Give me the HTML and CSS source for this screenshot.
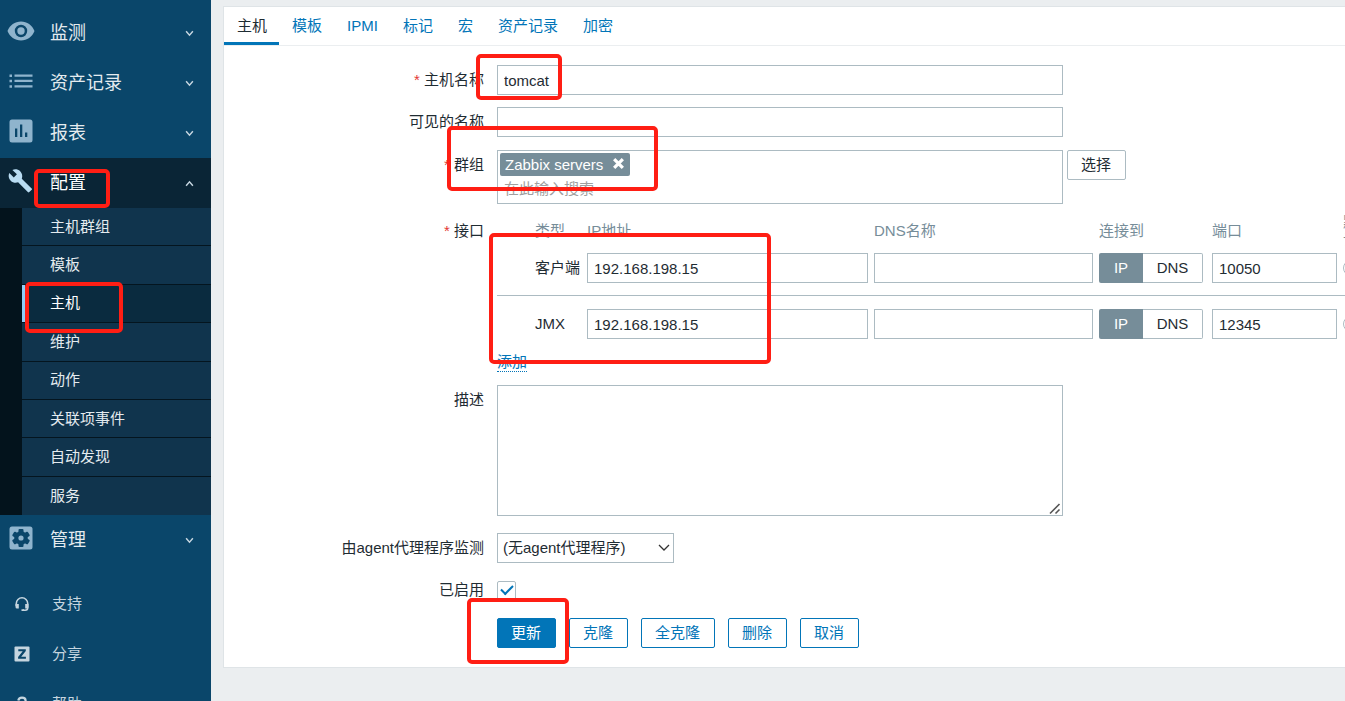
FILE: index.html
```
<!DOCTYPE html>
<html lang="zh-CN">
<head>
<meta charset="utf-8">
<title>主机配置</title>
<link rel="stylesheet" href="styles.css">
</head>
<body>
<div class="app">
  <nav class="sidebar">
    <ul class="menu">
      <li><a class="menu-link" href="#">
        <svg class="icon" viewBox="0 0 28 28"><path fill="currentColor" fill-rule="evenodd" d="M14 4.500C8 4.500 2.700 8.300.500 14c2.200 5.700 7.500 9.500 13.500 9.500s11.300-3.800 13.500-9.500C25.300 8.300 20 4.500 14 4.500zm0 15.700a6.200 6.200 0 1 1 0-12.400 6.200 6.200 0 0 1 0 12.400zm0-2.500a3.700 3.700 0 1 0 0-7.400 3.700 3.700 0 0 0 0 7.400z"/></svg>
        <span>监测</span><svg class="chevron" viewBox="0 0 8 6"><path d="M1 1l3 3.500L7 1"/></svg></a></li>
      <li><a class="menu-link" href="#">
        <svg class="icon" viewBox="0 0 28 28"><path fill="currentColor" d="M2.500 7.500h2.500v2.500H2.500zM7.500 7.500h18v2.300H7.500zM2.500 12.800h2.500v2.500H2.500zM7.500 12.800h18v2.300H7.500zM2.500 18.200h2.500v2.500H2.500zM7.500 18.200h18v2.300H7.500z"/></svg>
        <span>资产记录</span><svg class="chevron" viewBox="0 0 8 6"><path d="M1 1l3 3.500L7 1"/></svg></a></li>
      <li><a class="menu-link" href="#">
        <svg class="icon" viewBox="0 0 28 28"><path fill="currentColor" fill-rule="evenodd" d="M5 2.500h18a2.500 2.500 0 0 1 2.500 2.500v18a2.500 2.500 0 0 1-2.500 2.500H5A2.500 2.500 0 0 1 2.500 23V5A2.500 2.500 0 0 1 5 2.500zM8 11.500V20h2.300v-8.500zM13 7.500V20h2.300V7.500zM18 15.500V20h2.300v-4.500z"/></svg>
        <span>报表</span><svg class="chevron" viewBox="0 0 8 6"><path d="M1 1l3 3.500L7 1"/></svg></a></li>
      <li><a class="menu-link open" href="#">
        <svg class="icon" viewBox="0 0 28 28"><path fill="currentColor" d="M24.600 21.400 14.800 11.700c1-2.500.4-5.400-1.600-7.400C11.100 2.200 8 1.800 5.400 2.900l4.500 4.400-3.100 3.100L2.300 6C1.100 8.500 1.600 11.600 3.700 13.700c2 2 4.900 2.500 7.400 1.600l9.700 9.800c.4.400 1.100.4 1.500 0l2.400-2.400c.5-.4.500-1 0-1.300z"/></svg>
        <span>配置</span><svg class="chevron" viewBox="0 0 8 6"><path d="M1 5l3-3.500L7 5"/></svg></a>
        <ul class="submenu">
          <li><a href="#">主机群组</a></li>
          <li><a href="#">模板</a></li>
          <li><a class="current" href="#">主机</a></li>
          <li><a href="#">维护</a></li>
          <li><a href="#">动作</a></li>
          <li><a href="#">关联项事件</a></li>
          <li><a href="#">自动发现</a></li>
          <li><a href="#">服务</a></li>
        </ul></li>
      <li><a class="menu-link" href="#">
        <svg class="icon" viewBox="0 0 28 28"><rect x="2.500" y="2.500" width="23" height="23" rx="2.500" fill="currentColor"/><g fill="#0a466a"><circle cx="14" cy="14" r="6.800"/><rect x="11.500" y="5" width="5" height="18" rx="1"/><rect x="11.500" y="5" width="5" height="18" rx="1" transform="rotate(60 14 14)"/><rect x="11.500" y="5" width="5" height="18" rx="1" transform="rotate(120 14 14)"/></g><circle cx="14" cy="14" r="2.600" fill="currentColor"/></svg>
        <span>管理</span><svg class="chevron" viewBox="0 0 8 6"><path d="M1 1l3 3.500L7 1"/></svg></a></li>
    </ul>
    <ul class="menu-extra">
      <li><a href="#"><svg class="icon-small" viewBox="0 0 16 16"><path fill="none" stroke="currentColor" stroke-width="1.600" d="M2.300 10V7.500a5.700 5.700 0 0 1 11.400 0V12c0 1.600-1.200 2.200-2.500 2.200H9"/><path fill="currentColor" d="M1.500 8h3.300v4.500H3A1.500 1.500 0 0 1 1.500 11zM14.500 8h-3.300v4.500H13a1.500 1.500 0 0 0 1.500-1.500zM7.500 13.200h2.500v1.900H7.500z"/></svg><span>支持</span></a></li>
      <li><a href="#"><svg class="icon-small" viewBox="0 0 16 16"><rect x=".5" y=".5" width="15" height="15" rx="1" fill="currentColor"/><path fill="#0a466a" d="M4.300 3.200h7.500v1.900L7.200 10.700h4.700v2.100H4.100v-1.900L8.700 5.300H4.300z"/></svg><span>分享</span></a></li>
      <li><a href="#"><svg class="icon-small" viewBox="0 0 16 16"><path fill="none" stroke="currentColor" stroke-width="2.200" d="M4.300 4.500C4.600 2.500 6 1.600 8 1.600c2.200 0 3.600 1.200 3.600 3 0 2.600-3.500 2.600-3.500 5.900M8 12.500V15"/></svg><span>帮助</span></a></li>
    </ul>
  </nav>

  <main class="content">
    <form class="panel">
      <div class="tabs">
        <a class="active" href="#">主机</a><a href="#">模板</a><a href="#">IPMI</a><a href="#">标记</a><a href="#">宏</a><a href="#">资产记录</a><a href="#">加密</a>
      </div>
      <div class="form-body">
        <div class="row"><label class="required" for="host">主机名称</label><input class="field wide" id="host" type="text" value="tomcat"></div>
        <div class="row"><label for="visible">可见的名称</label><input class="field wide" id="visible" type="text"></div>
        <div class="row groups"><label class="required" for="groups">群组</label>
          <div class="multiselect wide">
            <span class="tag">Zabbix servers<button class="tag-remove" type="button" aria-label="移除"><svg viewBox="0 0 12 12"><path d="M2 2l8 8M10 2l-8 8"/></svg></button></span>
            <input id="groups" type="text" placeholder="在此输入搜索">
          </div>
          <button class="btn neutral" type="button">选择</button>
        </div>
        <div class="row interfaces"><span class="label required">接口</span>
          <div>
            <table>
              <colgroup><col class="c-handle"><col class="c-type"><col class="c-ip"><col class="c-dns"><col class="c-connect"><col class="c-port"><col class="c-default"></colgroup>
              <thead><tr><th></th><th>类型</th><th>IP地址</th><th>DNS名称</th><th>连接到</th><th>端口</th><th>默<br>认</th></tr></thead>
              <tbody>
                <tr><td></td><td>客户端</td>
                  <td><input class="field ip" type="text" aria-label="IP地址" value="192.168.198.15"></td>
                  <td><input class="field dns" type="text" aria-label="DNS名称"></td>
                  <td><div class="segmented"><button class="on" type="button">IP</button><button type="button">DNS</button></div></td>
                  <td><input class="field port" type="text" aria-label="端口" value="10050"></td>
                  <td><input class="radio" type="radio" name="d1" aria-label="默认"></td></tr>
                <tr><td></td><td>JMX</td>
                  <td><input class="field ip" type="text" aria-label="IP地址" value="192.168.198.15"></td>
                  <td><input class="field dns" type="text" aria-label="DNS名称"></td>
                  <td><div class="segmented"><button class="on" type="button">IP</button><button type="button">DNS</button></div></td>
                  <td><input class="field port" type="text" aria-label="端口" value="12345"></td>
                  <td><input class="radio" type="radio" name="d2" aria-label="默认"></td></tr>
              </tbody>
            </table>
            <a class="add" href="#">添加</a>
          </div>
        </div>
        <div class="row description"><label for="description">描述</label>
          <div class="textarea-wrap wide"><textarea id="description"></textarea><svg class="grip" viewBox="0 0 12 12"><path d="M1 10.500L10.500 1M6.500 10.500l4-4"/></svg></div></div>
        <div class="row proxy"><label for="proxy">由agent代理程序监测</label>
          <div class="select-wrap"><select id="proxy"><option>(无agent代理程序)</option></select><svg viewBox="0 0 12 8"><path d="M1 1l5 5 5-5"/></svg></div></div>
        <div class="row enabled"><label for="enabled">已启用</label><input class="check" id="enabled" type="checkbox" checked></div>
        <div class="row actions">
          <button class="btn primary" type="button">更新</button><button class="btn" type="button">克隆</button><button class="btn" type="button">全克隆</button><button class="btn" type="button">删除</button><button class="btn" type="button">取消</button>
        </div>
      </div>
    </form>
  </main>

  <div class="mark mark-config"></div>
  <div class="mark mark-hosts"></div>
  <div class="mark mark-name"></div>
  <div class="mark mark-group"></div>
  <div class="mark mark-interfaces"></div>
  <div class="mark mark-update"></div>
</div>
</body>
</html>
```
FILE: styles.css
```
* { box-sizing: border-box; }

body {
  margin: 0;
  background: #ebeef0;
  color: #1f2c33;
  font: 15px/18px "Liberation Sans", "Noto Sans CJK SC", sans-serif;
}

a { color: #0275b8; text-decoration: none; }
ul { list-style: none; margin: 0; padding: 0; }
input, button, select, textarea { font: inherit; color: inherit; margin: 0; }

.app {
  position: relative;
  display: flex;
  height: 100vh;
  overflow: hidden;
}

/* Sidebar */
.sidebar {
  flex: 0 0 211px;
  padding-top: 8px;
  background: #0a466a;
  overflow: hidden;
}

.menu-link {
  display: flex;
  align-items: center;
  height: 50px;
  padding: 0 17px 0 7px;
  color: #e4ebef;
  font-size: 18px;
}
.menu-link span { flex: 1; margin-left: 15px; }
.menu-link.open { background: #0a2536; color: #fff; }
.icon { width: 28px; height: 28px; margin-bottom: 4px; color: #8fb4cd; }
.open .icon { color: #b9dcf2; }
.chevron {
  width: 9px;
  height: 7px;
  fill: none;
  stroke: #c6d6e0;
  stroke-width: 1.3;
}

.submenu {
  display: grid;
  grid-auto-rows: 1fr;
  height: 307px;
  padding-left: 22px;
  background: linear-gradient(#03131c, #03131c) left / 22px 100% no-repeat, #10344d;
}
.submenu li { border-bottom: 1px solid #04151f; }
.submenu li:last-child { border-bottom: 0; }
.submenu a {
  display: flex;
  align-items: center;
  height: 100%;
  padding-left: 28px;
  color: #e4ebef;
}
.submenu .current {
  padding-left: 25px;
  border-left: 3px solid #8fcdf7;
  background: #0a2b3f;
  color: #fff;
}

.menu-extra { margin-top: 14px; }
.menu-extra a {
  display: flex;
  align-items: center;
  gap: 22px;
  height: 50px;
  padding-left: 14px;
  color: #c5d5df;
}
.icon-small { width: 16px; height: 16px; }

/* Panel */
.content {
  flex: 1;
  min-width: 0;
  padding: 6px 0 0 12px;
}
.panel {
  border: 1px solid #dfe4e7;
  border-right: 0;
  background: #fff;
  overflow: hidden;
}
.tabs { display: flex; border-bottom: 1px solid #ebeef0; }
.tabs a { height: 38px; padding: 0 12px 0 13px; line-height: 37px; }
.tabs .active { color: #1f2c33; border-bottom: 3px solid #0275b8; }

.form-body { padding: 19px 0; }
.row { display: flex; align-items: flex-start; margin-top: 12px; }
.row:first-child { margin-top: 0; }
.row > label, .row > .label {
  flex: 0 0 260px;
  margin-right: 13px;
  line-height: 30px;
  text-align: right;
}
.required::before { content: "* "; color: #e33734; }

.wide { flex: 0 0 566px; }
.field {
  height: 30px;
  padding: 0 6px;
  border: 1px solid #acbbc2;
  background: #fff;
}

.row.groups { margin-top: 13px; }
.multiselect {
  height: 54px;
  margin-right: 4px;
  padding: 2px;
  border: 1px solid #acbbc2;
}
.tag {
  display: flex;
  align-items: center;
  width: 130px;
  height: 23px;
  padding-left: 5px;
  border-radius: 2px;
  background: #768d99;
  color: #fff;
}
.tag-remove {
  display: flex;
  margin-left: auto;
  padding: 0 5px 2px 0;
  border: 0;
  background: none;
}
.tag-remove svg { width: 13px; height: 13px; stroke: #fff; stroke-width: 3; }
.multiselect input {
  display: block;
  width: 100%;
  height: 25px;
  padding: 0 4px;
  border: 0;
  background: none;
}
.multiselect input::placeholder { color: #a0a0a0; }

.btn {
  height: 30px;
  padding: 0 14px 0 13px;
  border: 1px solid #0275b8;
  border-radius: 2px;
  background: #fff;
  color: #0275b8;
}
.btn.neutral { border-color: #acbbc2; color: #1f2c33; }
.btn.primary { background: #0275b8; color: #fff; }

/* Interfaces */
.row.interfaces { margin-top: 9px; }
.row.interfaces > .label { line-height: 36px; }
table { width: 906px; table-layout: fixed; border-collapse: collapse; }
.c-handle { width: 38px; }
.c-type { width: 52px; }
.c-ip { width: 287px; }
.c-dns { width: 225px; }
.c-connect { width: 113px; }
.c-port { width: 131px; }
.c-default { width: 60px; }
th { padding: 0; color: #768d99; font-weight: normal; text-align: left; }
td { padding: 4px 0 12px; white-space: nowrap; }
tbody tr + tr td { padding: 13px 0 0; border-top: 1px solid #acbbc2; }
td .field { display: block; }
.ip { width: 281px; }
.dns { width: 219px; }
.port { width: 125px; }
.segmented { display: flex; width: 104px; height: 30px; }
.segmented button {
  flex: 1;
  padding: 0;
  border: 1px solid #acbbc2;
  border-left: 0;
  border-radius: 0 2px 2px 0;
  background: #fff;
}
.segmented .on {
  flex: 0 0 44px;
  border: 0;
  border-radius: 2px 0 0 2px;
  background: #768d99;
  color: #fff;
}
.radio {
  display: block;
  appearance: none;
  width: 16px;
  height: 16px;
  border: 1px solid #acbbc2;
  border-radius: 50%;
}
.add { display: inline-block; margin-top: 14px; border-bottom: 1px dotted #0275b8; }

.row.description { margin-top: 13px; }
.textarea-wrap { position: relative; }
textarea {
  display: block;
  width: 100%;
  height: 131px;
  border: 1px solid #acbbc2;
  resize: none;
}
.grip {
  position: absolute;
  right: 2px;
  bottom: 1px;
  width: 12px;
  height: 12px;
  stroke: #555;
  stroke-width: 1.6;
}

.row.proxy, .row.enabled { margin-top: 17px; }
.select-wrap { position: relative; width: 177px; }
select {
  display: block;
  appearance: none;
  width: 100%;
  height: 30px;
  padding: 0 5px;
  border: 1px solid #acbbc2;
  background: #fff;
}
.select-wrap svg {
  position: absolute;
  top: 11px;
  right: 4px;
  width: 12px;
  height: 8px;
  fill: none;
  stroke: #333;
  stroke-width: 1.3;
  pointer-events: none;
}
.row.enabled { align-items: center; }
.row.enabled > label { line-height: 20px; }
.check {
  display: grid;
  place-items: center;
  appearance: none;
  width: 19px;
  height: 19px;
  border: 1px solid #acbbc2;
  border-radius: 2px;
}
.check:checked::after {
  content: "";
  box-sizing: border-box;
  width: 12px;
  height: 7px;
  margin-bottom: 3px;
  border: solid #0275b8;
  border-width: 0 0 2px 2px;
  transform: rotate(-45deg);
}
.row.actions { gap: 13px; margin-top: 18px; padding-left: 273px; }

/* Highlight frames over the page */
.mark { position: absolute; border: 4px solid #ff1e14; border-radius: 5px; pointer-events: none; }
.mark-config { left: 34px; top: 169px; width: 76px; height: 39px; }
.mark-hosts { left: 25px; top: 282px; width: 98px; height: 51px; }
.mark-name { left: 476px; top: 54px; width: 86px; height: 46px; }
.mark-group { left: 447px; top: 126px; width: 211px; height: 65px; }
.mark-interfaces { left: 489px; top: 233px; width: 282px; height: 131px; }
.mark-update { left: 467px; top: 598px; width: 102px; height: 66px; }
```
